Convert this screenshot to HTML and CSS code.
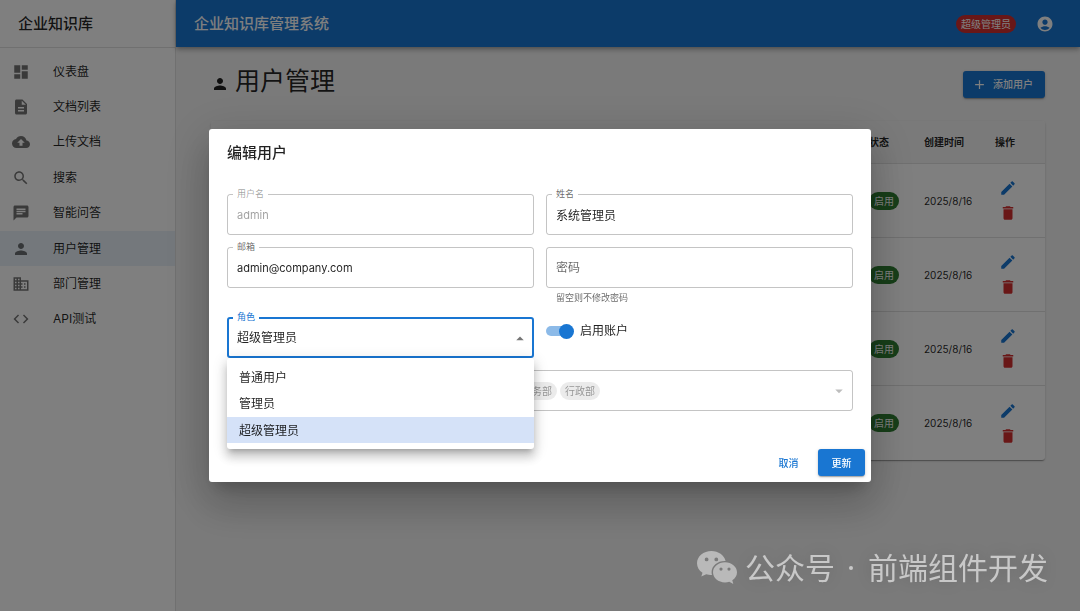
FILE: index.html
```html
<!DOCTYPE html>
<html lang="zh-CN">
<head>
<meta charset="utf-8">
<meta name="viewport" content="width=device-width, initial-scale=1">
<title>企业知识库管理系统</title>
<link rel="stylesheet" href="styles.css">
</head>
<body>
<svg class="sprite" aria-hidden="true">
  <symbol id="i-dashboard" viewBox="0 0 24 24"><path d="M3 13h8V3H3v10zm0 8h8v-6H3v6zm10 0h8V11h-8v10zm0-18v6h8V3h-8z"/></symbol>
  <symbol id="i-doc" viewBox="0 0 24 24"><path d="M14 2H6c-1.100 0-1.990.9-1.990 2L4 20c0 1.100.89 2 1.990 2H18c1.100 0 2-.9 2-2V8l-6-6zm2 16H8v-2h8v2zm0-4H8v-2h8v2zm-3-5V3.500L18.500 9H13z"/></symbol>
  <symbol id="i-cloud" viewBox="0 0 24 24"><path d="M19.350 10.040C18.670 6.590 15.640 4 12 4 9.110 4 6.600 5.640 5.350 8.040 2.340 8.360 0 10.910 0 14c0 3.310 2.690 6 6 6h13c2.760 0 5-2.240 5-5 0-2.640-2.050-4.780-4.650-4.960zM14 13v4h-4v-4H7l5-5 5 5h-3z"/></symbol>
  <symbol id="i-search" viewBox="0 0 24 24"><path d="M15.500 14h-.79l-.28-.27C15.410 12.590 16 11.110 16 9.500 16 5.910 13.090 3 9.500 3S3 5.910 3 9.500 5.910 16 9.500 16c1.610 0 3.090-.59 4.230-1.570l.27.28v.79l5 4.990L20.490 19l-4.990-5zm-6 0C7.010 14 5 11.990 5 9.500S7.010 5 9.500 5 14 7.010 14 9.500 11.990 14 9.500 14z"/></symbol>
  <symbol id="i-chat" viewBox="0 0 24 24"><path d="M20 2H4c-1.100 0-1.990.9-1.990 2L2 22l4-4h14c1.100 0 2-.9 2-2V4c0-1.100-.9-2-2-2zM6 9h12v2H6V9zm8 5H6v-2h8v2zm4-6H6V6h12v2z"/></symbol>
  <symbol id="i-person" viewBox="0 0 24 24"><path d="M12 12c2.210 0 4-1.790 4-4s-1.790-4-4-4-4 1.790-4 4 1.790 4 4 4zm0 2c-2.670 0-8 1.340-8 4v2h16v-2c0-2.660-5.330-4-8-4z"/></symbol>
  <symbol id="i-business" viewBox="0 0 24 24"><path d="M12 7V3H2v18h20V7H12zM6 19H4v-2h2v2zm0-4H4v-2h2v2zm0-4H4V9h2v2zm0-4H4V5h2v2zm4 12H8v-2h2v2zm0-4H8v-2h2v2zm0-4H8V9h2v2zm0-4H8V5h2v2zm10 12h-8v-2h2v-2h-2v-2h2v-2h-2V9h8v10zm-2-8h-2v2h2v-2zm0 4h-2v2h2v-2z"/></symbol>
  <symbol id="i-code" viewBox="0 0 24 24"><path d="M9.400 16.600L4.800 12l4.600-4.600L8 6l-6 6 6 6 1.400-1.400zm5.200 0l4.600-4.600-4.600-4.600L16 6l6 6-6 6-1.400-1.400z"/></symbol>
  <symbol id="i-account" viewBox="0 0 24 24"><path d="M12 2C6.480 2 2 6.480 2 12s4.480 10 10 10 10-4.480 10-10S17.520 2 12 2zm0 4c1.930 0 3.500 1.570 3.500 3.500S13.930 13 12 13s-3.500-1.570-3.500-3.500S10.070 6 12 6zm0 14c-2.030 0-4.430-.82-6.140-2.880C7.550 15.800 9.680 15 12 15s4.450.8 6.140 2.120C16.430 19.180 14.030 20 12 20z"/></symbol>
  <symbol id="i-add" viewBox="0 0 24 24"><path d="M19 13h-6v6h-2v-6H5v-2h6V5h2v6h6v2z"/></symbol>
  <symbol id="i-edit" viewBox="0 0 24 24"><path d="M3 17.250V21h3.750L17.810 9.940l-3.750-3.750L3 17.250zM20.710 7.040c.39-.39.39-1.020 0-1.410l-2.340-2.340c-.39-.39-1.020-.39-1.410 0l-1.830 1.830 3.750 3.750 1.830-1.830z"/></symbol>
  <symbol id="i-delete" viewBox="0 0 24 24"><path d="M6 19c0 1.100.9 2 2 2h8c1.100 0 2-.9 2-2V7H6v12zM19 4h-3.500l-1-1h-5l-1 1H5v2h14V4z"/></symbol>
  <symbol id="i-down" viewBox="0 0 24 24"><path d="M7 10l5 5 5-5z"/></symbol>
  <symbol id="i-up" viewBox="0 0 24 24"><path d="M7 15l5-5 5 5z"/></symbol>
</svg>

<div class="app">
  <aside class="sidebar">
    <div class="brand">企业知识库</div>
    <nav>
      <ul class="nav-list">
        <li><a class="nav-item" href="#"><svg class="icon"><use href="#i-dashboard"/></svg>仪表盘</a></li>
        <li><a class="nav-item" href="#"><svg class="icon"><use href="#i-doc"/></svg>文档列表</a></li>
        <li><a class="nav-item" href="#"><svg class="icon"><use href="#i-cloud"/></svg>上传文档</a></li>
        <li><a class="nav-item" href="#"><svg class="icon"><use href="#i-search"/></svg>搜索</a></li>
        <li><a class="nav-item" href="#"><svg class="icon"><use href="#i-chat"/></svg>智能问答</a></li>
        <li><a class="nav-item active" href="#" aria-current="page"><svg class="icon"><use href="#i-person"/></svg>用户管理</a></li>
        <li><a class="nav-item" href="#"><svg class="icon"><use href="#i-business"/></svg>部门管理</a></li>
        <li><a class="nav-item" href="#"><svg class="icon"><use href="#i-code"/></svg>API测试</a></li>
      </ul>
    </nav>
  </aside>

  <div class="page">
    <header class="topbar">
      <div class="topbar-title">企业知识库管理系统</div>
      <span class="chip chip-error">超级管理员</span>
      <button class="account" type="button" aria-label="账户"><svg class="icon"><use href="#i-account"/></svg></button>
    </header>

    <main class="content">
      <div class="page-head">
        <h1 class="page-title"><svg class="icon"><use href="#i-person"/></svg>用户管理</h1>
        <button class="btn btn-primary btn-add" type="button"><svg class="icon-small"><use href="#i-add"/></svg>添加用户</button>
      </div>

      <table class="users">
        <colgroup><col><col class="col-status"><col class="col-date"><col class="col-actions"></colgroup>
        <thead>
          <tr><th></th><th>状态</th><th>创建时间</th><th>操作</th></tr>
        </thead>
        <tbody>
          <tr><td></td><td><span class="chip chip-success">启用</span></td><td>2025/8/16</td><td><div class="actions"><button class="icon-btn edit" type="button" aria-label="编辑"><svg class="icon"><use href="#i-edit"/></svg></button><button class="icon-btn delete" type="button" aria-label="删除"><svg class="icon"><use href="#i-delete"/></svg></button></div></td></tr>
          <tr><td></td><td><span class="chip chip-success">启用</span></td><td>2025/8/16</td><td><div class="actions"><button class="icon-btn edit" type="button" aria-label="编辑"><svg class="icon"><use href="#i-edit"/></svg></button><button class="icon-btn delete" type="button" aria-label="删除"><svg class="icon"><use href="#i-delete"/></svg></button></div></td></tr>
          <tr><td></td><td><span class="chip chip-success">启用</span></td><td>2025/8/16</td><td><div class="actions"><button class="icon-btn edit" type="button" aria-label="编辑"><svg class="icon"><use href="#i-edit"/></svg></button><button class="icon-btn delete" type="button" aria-label="删除"><svg class="icon"><use href="#i-delete"/></svg></button></div></td></tr>
          <tr><td></td><td><span class="chip chip-success">启用</span></td><td>2025/8/16</td><td><div class="actions"><button class="icon-btn edit" type="button" aria-label="编辑"><svg class="icon"><use href="#i-edit"/></svg></button><button class="icon-btn delete" type="button" aria-label="删除"><svg class="icon"><use href="#i-delete"/></svg></button></div></td></tr>
        </tbody>
      </table>
    </main>
  </div>
</div>

<div class="backdrop">
  <form class="dialog" role="dialog" aria-modal="true" aria-labelledby="dialog-title">
    <h2 class="dialog-title" id="dialog-title">编辑用户</h2>
    <div class="dialog-body">
      <div class="field is-disabled">
        <label class="field-label" for="username">用户名</label>
        <input class="control latin" id="username" type="text" value="admin" disabled>
      </div>
      <div class="field">
        <label class="field-label" for="fullname">姓名</label>
        <input class="control" id="fullname" type="text" value="系统管理员">
      </div>
      <div class="field">
        <label class="field-label" for="email">邮箱</label>
        <input class="control latin" id="email" type="email" value="admin@company.com">
      </div>
      <div class="field">
        <input class="control" id="password" type="password" placeholder="密码" aria-label="密码" aria-describedby="password-help">
        <p class="help" id="password-help">留空则不修改密码</p>
      </div>
      <div class="field is-focused">
        <label class="field-label" for="role">角色</label>
        <select class="control" id="role">
          <option>普通用户</option>
          <option>管理员</option>
          <option selected>超级管理员</option>
        </select>
        <svg class="icon caret"><use href="#i-up"/></svg>
        <ul class="menu" role="listbox" aria-label="角色">
          <li class="menu-item" role="option">普通用户</li>
          <li class="menu-item" role="option">管理员</li>
          <li class="menu-item selected" role="option" aria-selected="true">超级管理员</li>
        </ul>
      </div>
      <label class="switch-row"><input class="switch" type="checkbox" role="switch" checked>启用账户</label>
      <div class="field field-wide is-disabled">
        <div class="control tags" aria-label="部门" aria-disabled="true">
          <span class="chip chip-muted">技术部</span>
          <span class="chip chip-muted">产品部</span>
          <span class="chip chip-muted">市场部</span>
          <span class="chip chip-muted">销售部</span>
          <span class="chip chip-muted">人力资源</span>
          <span class="chip chip-muted">客户服务</span>
          <span class="chip chip-muted">财务部</span>
          <span class="chip chip-muted">行政部</span>
        </div>
        <svg class="icon caret"><use href="#i-down"/></svg>
      </div>
    </div>
    <div class="dialog-actions">
      <button class="btn btn-text" type="button">取消</button>
      <button class="btn btn-primary" type="submit">更新</button>
    </div>
  </form>
</div>

<div class="watermark">
  <svg class="wechat" viewBox="0 0 40 34" aria-hidden="true">
    <path fill-rule="evenodd" d="M14.500 0C6.500 0 0 5.400 0 12.200c0 3.900 2.100 7.300 5.500 9.500L4.300 25.600l4.900-2.400c1.700.5 3.500.8 5.800.8-.3-1-.4-1.900-.4-2.900 0-6.300 5.700-11.200 13.200-11.200h.8C27.200 4.200 21.400 0 14.500 0zM9.600 6.500a1.900 1.900 0 1 1 0 3.800 1.900 1.900 0 0 1 0-3.800zm9.700 0a1.900 1.900 0 1 1 0 3.800 1.900 1.900 0 0 1 0-3.800z"/>
    <path fill-rule="evenodd" d="M40 21.300c0-5.700-5.400-10.100-12-10.100s-12 4.400-12 10.100 5.400 10.100 12 10.100c1.500 0 3-.2 4.300-.6l4 2.200-1-3.700c2.900-1.800 4.700-4.700 4.700-8zM24 16.500a1.600 1.600 0 1 1 0 3.200 1.600 1.600 0 0 1 0-3.200zm8 0a1.600 1.600 0 1 1 0 3.200 1.600 1.600 0 0 1 0-3.200z"/>
  </svg>
  <span>公众号</span><span class="dot"></span><span>前端组件开发</span>
</div>
</body>
</html>
```

FILE: styles.css
```css
:root {
  --primary: #1976d2;
  --error: #d32f2f;
  --success: #2e7d32;
  --text: rgba(0, 0, 0, 0.87);
  --text-soft: rgba(0, 0, 0, 0.6);
  --text-off: rgba(0, 0, 0, 0.38);
  --line: rgba(0, 0, 0, 0.12);
}

* {
  box-sizing: border-box;
}

body {
  margin: 0;
  background: #f5f5f5;
  color: var(--text);
  font-family: Inter, "Noto Sans CJK SC", sans-serif;
  font-size: 12px;
  line-height: 18px;
}

button,
input,
select {
  font: inherit;
  color: inherit;
}

button {
  border: 0;
  padding: 0;
  background: none;
  cursor: pointer;
}

h1,
h2,
p,
ul {
  margin: 0;
  padding: 0;
}

ul {
  list-style: none;
}

.sprite {
  display: none;
}

.icon {
  width: 18px;
  height: 18px;
  fill: currentColor;
  flex: none;
}

.icon-small {
  width: 15px;
  height: 15px;
  fill: currentColor;
  flex: none;
}

/* Shell */
.app {
  display: flex;
  min-height: 100vh;
}

.sidebar {
  flex: 0 0 176px;
  background: #fff;
  border-right: 1px solid var(--line);
}

.brand {
  display: flex;
  align-items: center;
  height: 48px;
  padding: 0 18px;
  border-bottom: 1px solid var(--line);
  font-size: 15px;
  font-weight: 500;
}

.nav-list {
  display: grid;
  grid-auto-rows: 1fr;
  height: 295px;
  padding: 6px 0;
}

.nav-item {
  display: flex;
  align-items: center;
  gap: 23px;
  height: 100%;
  padding: 0 12px;
  color: inherit;
  text-decoration: none;
}

.nav-item .icon {
  color: rgba(0, 0, 0, 0.54);
}

.nav-item.active {
  background: #e8f1f8;
}

.page {
  flex: 1;
  min-width: 0;
}

.topbar {
  display: flex;
  align-items: center;
  height: 47px;
  padding: 0 26px 0 18px;
  background: var(--primary);
  color: #fff;
  box-shadow: 0 2px 4px -1px rgba(0, 0, 0, 0.2), 0 3px 5px rgba(0, 0, 0, 0.14), 0 1px 8px rgba(0, 0, 0, 0.12);
}

.topbar-title {
  flex: 1;
  font-size: 15px;
  font-weight: 500;
}

.account {
  display: flex;
  margin-left: 20px;
}

.chip {
  display: inline-flex;
  align-items: center;
  height: 18px;
  padding: 0 5px;
  border-radius: 9px;
  font-size: 10px;
  white-space: nowrap;
}

.chip-error {
  background: var(--error);
  color: #fff;
}

.chip-success {
  background: var(--success);
  color: #fff;
}

.chip-muted {
  background: rgba(0, 0, 0, 0.08);
  color: var(--text-off);
}

.content {
  padding: 18px 35px;
}

.page-head {
  display: flex;
  align-items: center;
  justify-content: space-between;
  height: 38px;
  margin-bottom: 18px;
}

.page-title {
  display: flex;
  align-items: flex-end;
  gap: 6px;
  padding-bottom: 6px;
  font-size: 25px;
  font-weight: 400;
  line-height: 36px;
}

.page-title .icon {
  margin-bottom: 6px;
}

.btn {
  display: inline-flex;
  align-items: center;
  justify-content: center;
  min-width: 47px;
  height: 27px;
  padding: 0 12px;
  border-radius: 3px;
  font-size: 10px;
  font-weight: 500;
}

.btn-primary {
  background: var(--primary);
  color: #fff;
  box-shadow: 0 2px 1px -1px rgba(0, 0, 0, 0.2), 0 1px 2px rgba(0, 0, 0, 0.14), 0 1px 4px rgba(0, 0, 0, 0.12);
}

.btn-text {
  color: var(--primary);
}

.btn-add {
  gap: 6px;
  padding-left: 9px;
}

/* User table */
.users {
  width: 100%;
  table-layout: fixed;
  border-spacing: 0;
  background: #fff;
  border-radius: 3px;
  overflow: hidden;
  font-size: 10px;
  box-shadow: 0 2px 1px -1px rgba(0, 0, 0, 0.2), 0 1px 1px rgba(0, 0, 0, 0.14), 0 1px 3px rgba(0, 0, 0, 0.12);
}

.col-status {
  width: 55px;
}

.col-date {
  width: 71px;
}

.col-actions {
  width: 62px;
}

.users th {
  height: 43px;
  padding: 0 12px;
  background: #f5f5f5;
  border-bottom: 1px solid #e0e0e0;
  font-weight: 600;
  text-align: left;
  white-space: nowrap;
}

.users td {
  height: 74px;
  padding: 0 12px;
  border-bottom: 1px solid #e0e0e0;
  white-space: nowrap;
}

.users tr:last-child td {
  border-bottom: 0;
}

.actions {
  display: flex;
  flex-direction: column;
}

.icon-btn {
  display: flex;
  align-items: center;
  justify-content: center;
  width: 25px;
  height: 25px;
}

.icon-btn.edit {
  color: var(--primary);
}

.icon-btn.delete {
  color: var(--error);
}

/* Dialog */
.backdrop {
  position: fixed;
  inset: 0;
  display: flex;
  align-items: center;
  justify-content: center;
  background: rgba(0, 0, 0, 0.5);
}

.dialog {
  width: 100%;
  max-width: 662px;
  background: #fff;
  border-radius: 3px;
  box-shadow: 0 11px 15px -7px rgba(0, 0, 0, 0.2), 0 24px 38px 3px rgba(0, 0, 0, 0.14), 0 9px 46px 8px rgba(0, 0, 0, 0.12);
}

.dialog-title {
  padding: 12px 18px;
  font-size: 15px;
  font-weight: 500;
  line-height: 24px;
}

.dialog-body {
  display: grid;
  grid-template-columns: 1fr 1fr;
  gap: 12px;
  padding: 17px 18px 32px;
}

.field {
  position: relative;
}

.field-wide {
  grid-column: 1 / -1;
}

.field-label {
  position: absolute;
  top: -6px;
  left: 6px;
  padding: 0 4px;
  background: #fff;
  color: var(--text-soft);
  font-size: 9px;
  line-height: 12px;
}

.control {
  display: block;
  width: 100%;
  height: 41px;
  padding: 0 9px;
  border: 1px solid rgba(0, 0, 0, 0.23);
  border-radius: 3px;
  background: none;
  appearance: none;
  outline: 0;
}

.control.latin {
  font-size: 11px;
}

.control::placeholder {
  color: var(--text-soft);
  opacity: 1;
}

.is-focused .control {
  padding: 0 8px;
  border: 2px solid var(--primary);
}

.is-focused .field-label {
  color: var(--primary);
}

.caret {
  position: absolute;
  top: 12px;
  right: 5px;
  color: rgba(0, 0, 0, 0.54);
  pointer-events: none;
}

.is-disabled .control,
.is-disabled .field-label {
  color: var(--text-off);
}

.is-disabled .caret {
  color: rgba(0, 0, 0, 0.26);
}

.help {
  padding: 3px 10px 0;
  color: var(--text-soft);
  font-size: 9px;
  line-height: 14px;
}

.control.tags {
  display: flex;
  align-items: center;
  gap: 3px;
  padding: 0 11px;
}

.menu {
  position: absolute;
  z-index: 1;
  top: 100%;
  left: 0;
  right: 0;
  display: flex;
  flex-direction: column;
  height: 91px;
  padding: 6px 0;
  background: #fff;
  border-radius: 3px;
  box-shadow: 0 5px 5px -3px rgba(0, 0, 0, 0.2), 0 8px 10px 1px rgba(0, 0, 0, 0.14), 0 3px 14px 2px rgba(0, 0, 0, 0.12);
}

.menu-item {
  display: flex;
  flex: 1;
  align-items: center;
  padding: 2px 12px 0;
}

.menu-item.selected {
  background: #d5e2f8;
}

.switch-row {
  display: flex;
  align-items: center;
  gap: 6px;
  height: 28px;
}

.switch {
  display: flex;
  align-items: center;
  justify-content: flex-end;
  width: 28px;
  height: 10px;
  margin: 0;
  border-radius: 5px;
  background: linear-gradient(#8cbae8, #8cbae8) left / 24px 100% no-repeat;
  appearance: none;
}

.switch::before {
  content: "";
  width: 15px;
  height: 15px;
  border-radius: 50%;
  background: var(--primary);
  flex: none;
}

.dialog-actions {
  display: flex;
  justify-content: flex-end;
  gap: 6px;
  padding: 6px;
}

/* Channel mark */
.watermark {
  position: fixed;
  right: 32px;
  bottom: 24px;
  display: flex;
  align-items: center;
  color: #c8c8c8;
  font-size: 30px;
  line-height: 38px;
  white-space: nowrap;
  text-shadow: 0 0 16px rgba(0, 0, 0, 0.15);
}

.wechat {
  width: 40px;
  height: 34px;
  margin-right: 8px;
  fill: #b9b9b9;
}

.dot {
  width: 4px;
  height: 4px;
  margin: 0 15px 0 14px;
  border-radius: 50%;
  background: #c8c8c8;
}
```
